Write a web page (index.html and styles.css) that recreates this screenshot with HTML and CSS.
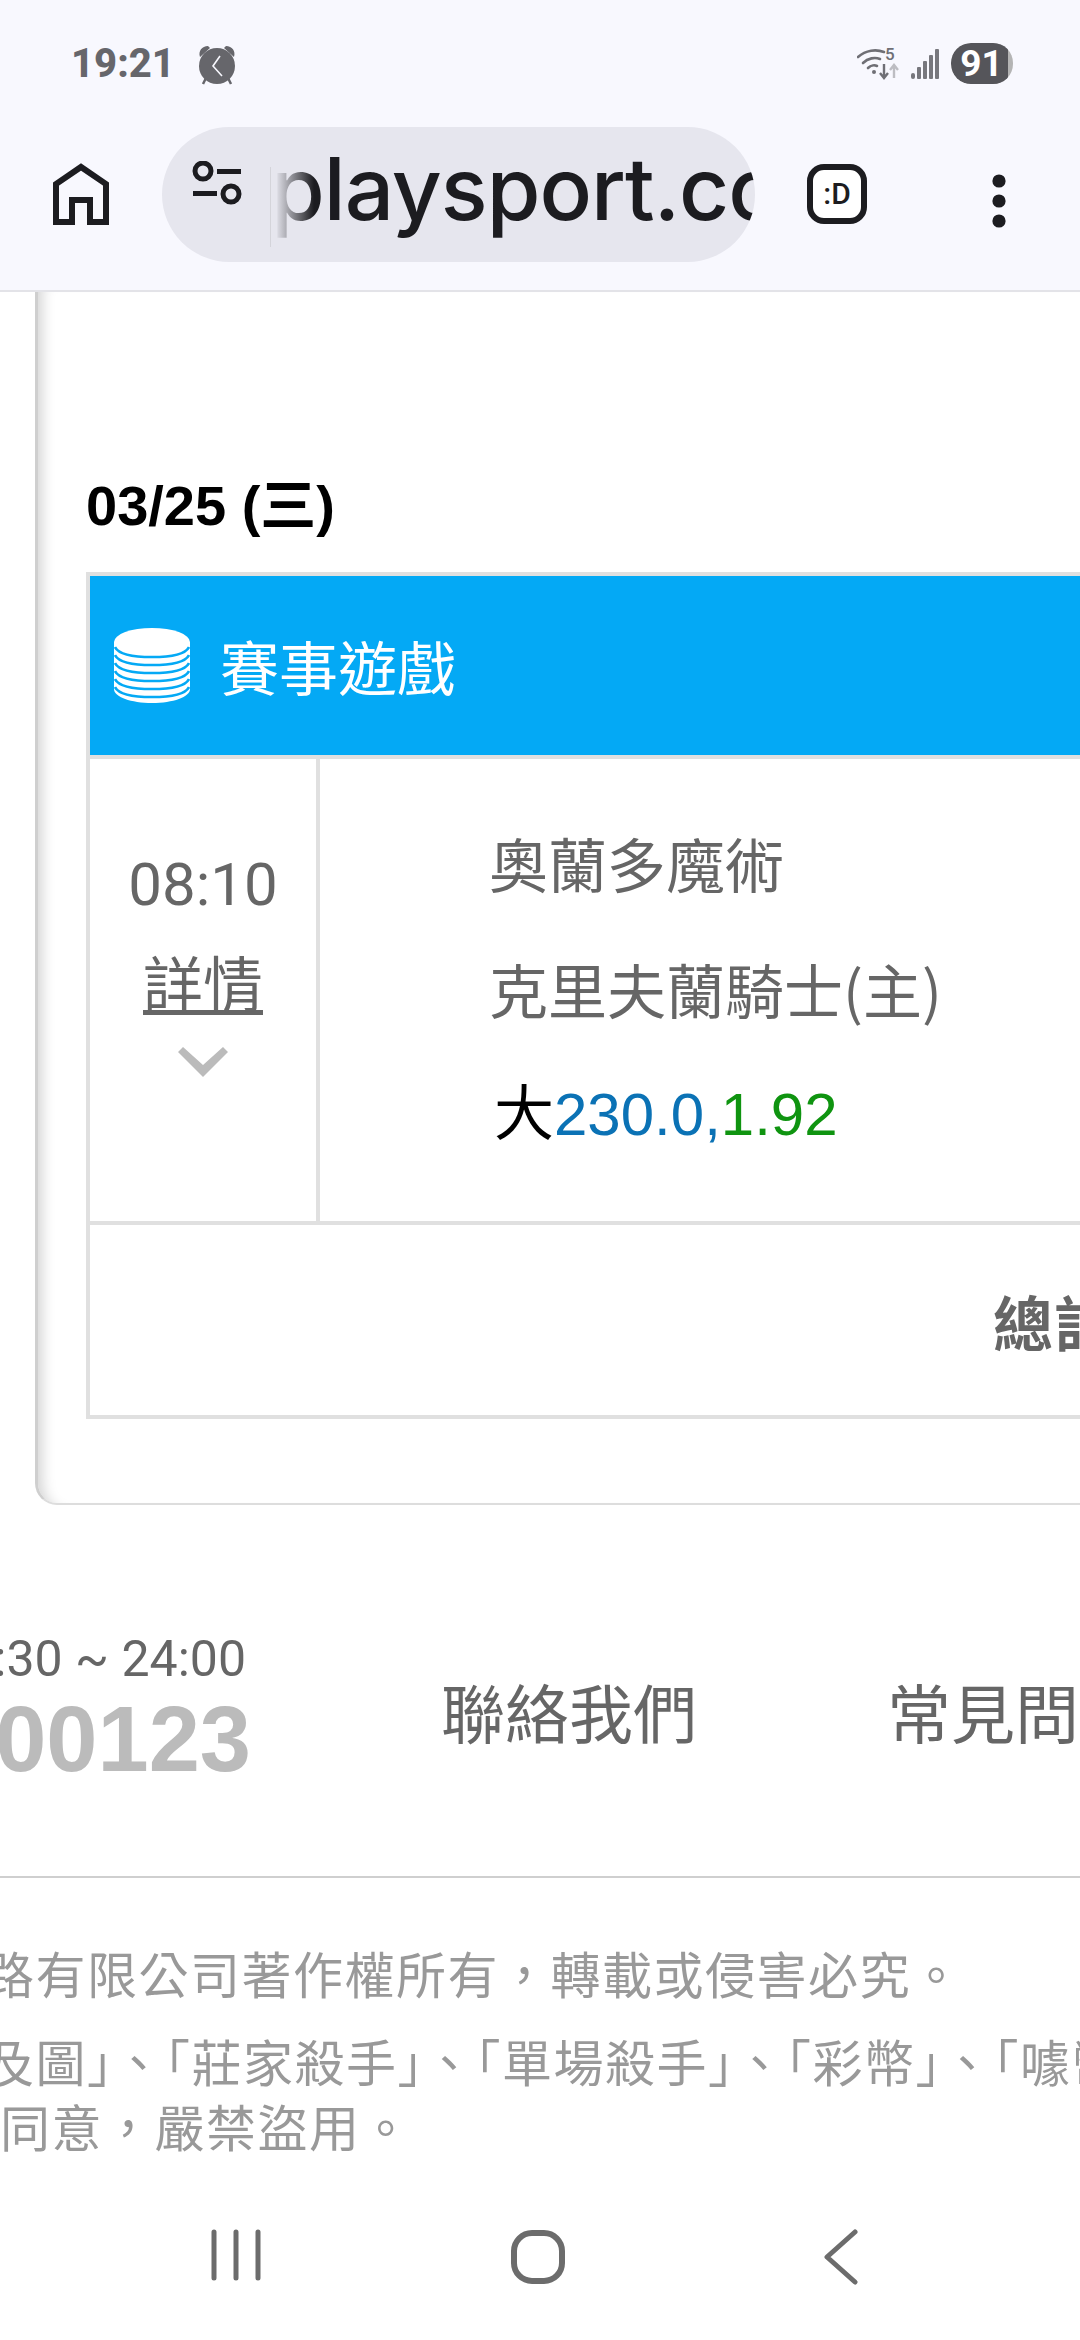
FILE: index.html
```html
<!DOCTYPE html>
<html lang="zh-Hant">
<head>
<meta charset="utf-8">
<title>playsport.cc</title>
<link rel="stylesheet" href="styles.css">
</head>
<body>
<div class="app">
  <header class="chrome">
    <div class="status">
      <div class="status-left">
        <span class="clock">19:21</span>
        <svg class="alarm" width="38" height="40" viewBox="0 0 38 40">
          <path d="M2 12 C0 6 4 1 10 1 L12 3 Z M36 12 C38 6 34 1 28 1 L26 3 Z" fill="#66666b"/>
          <path d="M8 33 L5 39 M30 33 L33 39" stroke="#66666b" stroke-width="2.5"/>
          <circle cx="19" cy="21" r="18" fill="#66666b"/>
          <path d="M22 11 L15 21 L24 31" fill="none" stroke="#f8f8fe" stroke-width="1.6"/>
        </svg>
      </div>
      <div class="status-right">
        <svg class="wifi" width="42" height="34" viewBox="0 0 42 34">
          <g fill="none" stroke="#6f6f75" stroke-width="2.6" stroke-linecap="round">
            <path d="M1 10 C9 3 19 2 27 5"/>
            <path d="M6 16 C11 11 18 10 23 12"/>
            <path d="M11 21 C14 18 18 18 20 19"/>
          </g>
          <circle cx="17" cy="25" r="2" fill="#6f6f75"/>
          <text x="28" y="13" class="wifi-five">5</text>
          <path d="M27 17 V30 M23 26 L27 31 L31 26" fill="none" stroke="#6f6f75" stroke-width="2.4"/>
          <path d="M37 31 V19 M33 23 L37 18 L41 23" fill="none" stroke="#bdbdc2" stroke-width="2.4"/>
        </svg>
        <svg class="signal" width="28" height="30" viewBox="0 0 28 30">
          <g fill="#77777d">
            <rect x="0" y="24" width="4" height="6" rx="2"/>
            <rect x="6" y="18" width="4" height="12" rx="1"/>
            <rect x="12" y="12" width="4" height="18" rx="1"/>
            <rect x="18" y="6" width="4" height="24" rx="1"/>
            <rect x="24" y="0" width="4" height="30" rx="1"/>
          </g>
        </svg>
        <div class="battery"><span class="battery-fill">91</span></div>
      </div>
    </div>
    <div class="toolbar">
      <svg class="home-icon" width="56" height="62" viewBox="0 0 56 62">
        <path d="M3 59 V21 L28 4 L53 21 V59 H37 V37 H19 V59 Z" fill="none" stroke="#1c1c20" stroke-width="6"/>
      </svg>
      <div class="pill">
        <svg class="tune" width="50" height="44" viewBox="0 0 50 44">
          <g fill="none" stroke="#1c1c20" stroke-width="5">
            <circle cx="11" cy="10" r="8"/>
            <circle cx="39" cy="33" r="8"/>
          </g>
          <rect x="25" y="8" width="24" height="5" fill="#1c1c20"/>
          <rect x="1" y="30" width="24" height="5" fill="#1c1c20"/>
        </svg>
        <span class="url">playsport.cc</span>
        <span class="url-fade"></span>
      </div>
      <div class="tab-count"><span>:D</span></div>
      <svg class="menu" width="14" height="54" viewBox="0 0 14 54">
        <circle cx="7" cy="7" r="6.6" fill="#1c1c20"/>
        <circle cx="7" cy="27" r="6.6" fill="#1c1c20"/>
        <circle cx="7" cy="47" r="6.6" fill="#1c1c20"/>
      </svg>
    </div>
  </header>

  <section class="card">
    <h2 class="date">03/25 (三)</h2>
    <div class="table">
      <div class="table-head">
        <svg class="coins" width="76" height="76" viewBox="0 0 76 76">
          <path d="M0 14 V61 C0 69 17 75 38 75 C59 75 76 69 76 61 V14 Z" fill="#fff"/>
          <ellipse cx="38" cy="14" rx="38" ry="14" fill="#fff"/>
          <g fill="none" stroke="#04a9f5" stroke-width="2.6">
            <path d="M1 19 C5 27 20 29 38 29 C56 29 71 27 75 19"/>
            <path d="M1 27 C5 35 20 37 38 37 C56 37 71 35 75 27"/>
            <path d="M1 35 C5 43 20 45 38 45 C56 45 71 43 75 35"/>
            <path d="M1 43 C5 51 20 53 38 53 C56 53 71 51 75 43"/>
            <path d="M1 51 C5 59 20 61 38 61 C56 61 71 59 75 51"/>
            <path d="M1 59 C5 67 20 69 38 69 C56 69 71 67 75 59"/>
          </g>
        </svg>
        <span class="head-title">賽事遊戲</span>
      </div>
      <div class="game-row">
        <div class="time-cell">
          <span class="game-time">08:10</span>
          <a class="details">詳情</a>
          <svg class="chevron" width="50" height="30" viewBox="0 0 50 30">
            <path d="M0 5 L5 0 L25 18 L45 0 L50 5 L25 30 Z" fill="#bbbbbb"/>
          </svg>
        </div>
        <div class="match-cell">
          <div class="team">奧蘭多魔術</div>
          <div class="team">克里夫蘭騎士(主)</div>
          <div class="odds"><span class="odds-side">大</span><span class="odds-line">230.0,</span><span class="odds-price">1.92</span></div>
        </div>
      </div>
      <div class="total-row"><span class="total">總計</span></div>
    </div>
  </section>

  <footer class="footer">
    <div class="contact">
      <div class="hours">
        <span class="hours-text">:30 ~ 24:00</span>
        <span class="phone">00123</span>
      </div>
      <a class="foot-link link-contact">聯絡我們</a>
      <a class="foot-link link-faq">常見問題</a>
    </div>
    <div class="legal">
      <p class="legal-line">路有限公司著作權所有，轉載或侵害必究。</p>
      <p class="legal-block">及圖」、「莊家殺手」、「單場殺手」、「彩幣」、「噱幣」<br><span class="legal-second">同意，嚴禁盜用。</span></p>
    </div>
  </footer>

  <nav class="navbar">
    <svg class="nav-recent" width="52" height="52" viewBox="0 0 52 52">
      <g stroke="#6c6c6c" stroke-width="5" stroke-linecap="round">
        <path d="M4 3 V49 M26 3 V49 M48 3 V49"/>
      </g>
    </svg>
    <svg class="nav-home" width="56" height="56" viewBox="0 0 56 56">
      <rect x="4" y="4" width="48" height="48" rx="18" fill="none" stroke="#6c6c6c" stroke-width="6"/>
    </svg>
    <svg class="nav-back" width="34" height="56" viewBox="0 0 34 56">
      <path d="M31 3 L3 28 L31 53" fill="none" stroke="#6c6c6c" stroke-width="5" stroke-linecap="round" stroke-linejoin="round"/>
    </svg>
  </nav>
</div>
</body>
</html>
```

FILE: styles.css
```css
* { box-sizing: border-box; }
html, body { margin: 0; padding: 0; background: #fff; }
.app {
  width: 1080px;
  height: 2340px;
  overflow: hidden;
  display: flex;
  flex-direction: column;
  font-family: "Noto Sans CJK TC", sans-serif;
  color: #666;
}

/* browser chrome */
.chrome { height: 292px; flex: none; background: #f8f8fe; border-bottom: 2px solid #e3e3e8; }
.status { height: 127px; display: flex; justify-content: space-between; padding: 43px 67px 0 71px; }
.status-left { display: flex; align-items: flex-start; }
.clock { font: 800 40px/42px Roboto, sans-serif; color: #66666b; }
.alarm { margin: 2px 0 0 23px; }
.status-right { display: flex; align-items: flex-start; }
.wifi { margin: 4px 0 0 0; }
.wifi-five { font: 500 17px Roboto, sans-serif; fill: #6f6f75; }
.signal { margin: 6px 0 0 12px; }
.battery { width: 62px; height: 41px; margin-left: 12px; border-radius: 20px; background: #b4b4b4; overflow: hidden; }
.battery-fill { display: block; width: 57px; height: 41px; background: #55555a; color: #fff; font: 700 37px/41px Roboto, sans-serif; text-align: center; padding-left: 4px; border-radius: 20px 6px 6px 20px; }

.toolbar { height: 163px; display: flex; align-items: flex-start; padding-left: 53px; }
.home-icon { margin-top: 36px; flex: none; }
.pill { position: relative; width: 593px; height: 135px; margin-left: 53px; border-radius: 68px; background: #e6e6ee; display: flex; align-items: flex-start; flex: none; overflow: hidden; }
.tune { margin: 34px 0 0 30px; flex: none; }
.url { font: 500 87px/135px Inter, sans-serif; color: #1c1c20; margin-left: 29px; letter-spacing: -1px; white-space: nowrap; margin-top: -6px; }
.url-fade { position: absolute; left: 108px; top: 40px; width: 44px; height: 80px; background: linear-gradient(to right, #e6e6ee 10%, rgba(230,230,238,0)); border-left: 1px solid #d4d4da; }
.tab-count { width: 60px; height: 60px; margin: 37px 0 0 52px; flex: none; border: 6px solid #1c1c20; border-radius: 17px; background: #fff; display: flex; align-items: center; justify-content: center; font: 500 30px/1 Roboto, sans-serif; color: #1c1c20; }
.menu { margin: 47px 0 0 125px; flex: none; }

/* card */
.card {
  flex: none;
  width: 1400px;
  height: 1213px;
  margin-left: 35px;
  padding: 176px 0 0 48px;
  background: #fff;
  border-left: 3px solid #cfcfcf;
  border-bottom: 2px solid #dddddd;
  border-bottom-left-radius: 22px;
  box-shadow: inset 16px 0 14px -12px rgba(0,0,0,.18);
}
.date { margin: 0 0 28px; height: 76px; font: 700 56px/76px "Liberation Sans", "Noto Sans CJK TC", sans-serif; color: #000; }
.table { width: 1300px; border: 4px solid #e0e0e0; }
.table-head { height: 183px; background: #04a9f5; border-bottom: 4px solid #e0e0e0; display: flex; align-items: center; padding: 0 0 0 24px; }
.coins { flex: none; }
.head-title { margin-left: 30px; font-size: 59px; line-height: 1; color: #fff; }
.game-row { height: 466px; display: flex; border-bottom: 4px solid #e0e0e0; }
.time-cell { width: 230px; flex: none; border-right: 4px solid #e0e0e0; display: flex; flex-direction: column; align-items: center; padding-top: 88px; }
.game-time { font: 400 60px/76px Roboto, sans-serif; color: #666; }
.details { font-size: 60px; line-height: 80px; margin-top: 18px; color: #666; text-decoration: underline; text-decoration-thickness: 5px; }
.chevron { margin-top: 26px; }
.match-cell { padding: 62px 0 0 169px; }
.team { font-size: 59px; line-height: 84px; height: 126px; color: #666; white-space: nowrap; }
.odds { font: 400 60px/84px "Liberation Sans", "Noto Sans CJK TC", sans-serif; margin-left: 5px; white-space: nowrap; }
.odds-side { color: #000; }
.odds-line { color: #0b72b5; }
.odds-price { color: #0f9410; }
.total-row { height: 190px; display: flex; align-items: center; padding-left: 903px; }
.total { font-size: 60px; font-weight: 700; color: #666; white-space: nowrap; }

/* footer */
.footer { flex: 1; min-height: 0; }
.contact { height: 373px; border-bottom: 2px solid #cfcfcf; display: flex; align-items: flex-start; }
.hours { width: 251px; flex: none; display: flex; flex-direction: column; align-items: flex-end; padding-top: 124px; white-space: nowrap; }
.hours-text { font: 400 50px/60px Roboto, sans-serif; color: #666; padding-right: 5px; }
.phone { font: 700 92px/100px "Liberation Sans", sans-serif; color: #bbb; }
.foot-link { font-size: 64px; line-height: 90px; color: #666; white-space: nowrap; }
.link-contact { margin: 160px 0 0 190px; }
.link-faq { margin: 160px 0 0 190px; }
.legal { color: #999; font-size: 50px; white-space: nowrap; margin-left: -16px; letter-spacing: 1.5px; }
.legal-line { margin: 58px 0 0; line-height: 72px; }
.legal-block { margin: 20px 0 0; line-height: 65px; }
.legal-second { margin-left: 16px; }

/* system nav */
.navbar { flex: none; height: 111px; padding-bottom: 55px; display: flex; align-items: flex-start; padding-left: 210px; }
.nav-home { margin-left: 248px; }
.nav-back { margin-left: 258px; }
```
